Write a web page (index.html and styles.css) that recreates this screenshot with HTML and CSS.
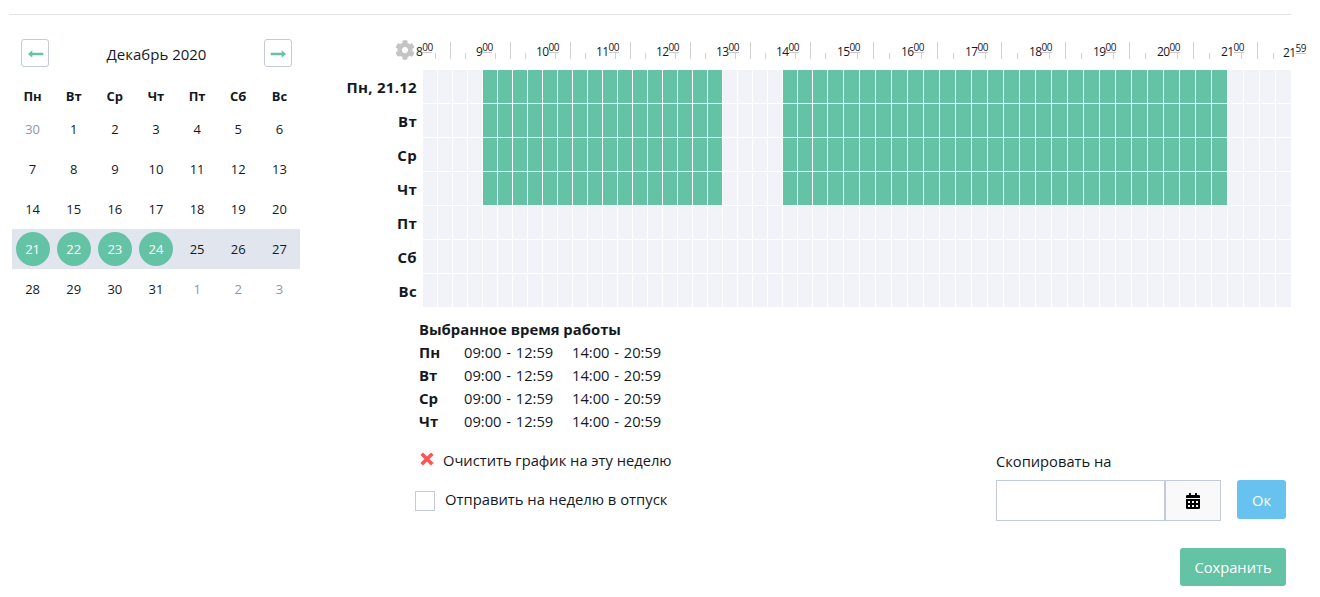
FILE: index.html
```html
<!DOCTYPE html>
<html lang="ru">
<head>
<meta charset="utf-8">
<title>График работы</title>
<link rel="stylesheet" href="styles.css">
</head>
<body>
<hr class="divider">
<main class="page">
  <section class="calendar">
    <header class="cal-head">
      <button class="nav" aria-label="Назад"><svg width="16" height="8" viewBox="0 0 16 8"><path d="M0 4 4.3 0.3V2.7H15.3V5.3H4.3V7.7Z"/></svg></button>
      <span class="cal-title">Декабрь 2020</span>
      <button class="nav" aria-label="Вперёд"><svg width="16" height="8" viewBox="0 0 16 8"><path d="M16 4 11.7 0.3V2.7H0.7V5.3H11.7V7.7Z"/></svg></button>
    </header>
    <div class="week names"><span>Пн</span><span>Вт</span><span>Ср</span><span>Чт</span><span>Пт</span><span>Сб</span><span>Вс</span></div>
    <div class="week"><span class="other">30</span><span>1</span><span>2</span><span>3</span><span>4</span><span>5</span><span>6</span></div>
    <div class="week"><span>7</span><span>8</span><span>9</span><span>10</span><span>11</span><span>12</span><span>13</span></div>
    <div class="week"><span>14</span><span>15</span><span>16</span><span>17</span><span>18</span><span>19</span><span>20</span></div>
    <div class="week current"><span class="on">21</span><span class="on">22</span><span class="on">23</span><span class="on">24</span><span>25</span><span>26</span><span>27</span></div>
    <div class="week"><span>28</span><span>29</span><span>30</span><span>31</span><span class="other">1</span><span class="other">2</span><span class="other">3</span></div>
  </section>

  <section class="schedule">
    <div class="scale">
      <svg class="gear" width="20" height="20" viewBox="0 0 512 512"><path d="M487.4 315.7l-42.6-24.6c4.3-23.2 4.3-47 0-70.2l42.6-24.6c4.9-2.8 7.1-8.6 5.5-14-11.1-35.6-30-67.8-54.7-94.6-3.8-4.1-10-5.1-14.8-2.3L380.8 110c-17.9-15.4-38.5-27.3-60.8-35.1V25.8c0-5.600-3.900-10.500-9.400-11.700-36.700-8.200-74.300-7.800-109.200 0-5.500 1.200-9.400 6.100-9.400 11.700V75c-22.200 7.900-42.800 19.800-60.800 35.100L88.700 85.500c-4.900-2.800-11-1.900-14.800 2.300-24.700 26.700-43.600 58.900-54.700 94.600-1.700 5.400.6 11.200 5.500 14L67.300 221c-4.300 23.200-4.300 47 0 70.200l-42.600 24.600c-4.900 2.800-7.100 8.600-5.500 14 11.100 35.600 30 67.800 54.700 94.600 3.800 4.100 10 5.100 14.800 2.300l42.600-24.600c17.900 15.400 38.500 27.300 60.800 35.100v49.200c0 5.600 3.900 10.500 9.400 11.700 36.700 8.200 74.300 7.800 109.200 0 5.500-1.200 9.400-6.100 9.400-11.700v-49.200c22.200-7.900 42.800-19.800 60.800-35.100l42.600 24.600c4.900 2.800 11 1.900 14.800-2.300 24.700-26.700 43.600-58.900 54.700-94.600 1.500-5.500-.7-11.300-5.600-14.100zM256 336c-44.100 0-80-35.900-80-80s35.900-80 80-80 80 35.900 80 80-35.900 80-80 80z"/></svg>
      <div class="ticks" id="ticks"></div>
    </div>
    <div class="table">
      <div class="days"><span>Пн, 21.12</span><span>Вт</span><span>Ср</span><span>Чт</span><span>Пт</span><span>Сб</span><span>Вс</span></div>
      <div class="cells" id="cells"></div>
    </div>

    <div class="lower">
      <div class="info">
        <h4>Выбранное время работы</h4>
        <div class="hours"><b>Пн</b><span>09:00 - 12:59</span><span>14:00 - 20:59</span></div>
        <div class="hours"><b>Вт</b><span>09:00 - 12:59</span><span>14:00 - 20:59</span></div>
        <div class="hours"><b>Ср</b><span>09:00 - 12:59</span><span>14:00 - 20:59</span></div>
        <div class="hours"><b>Чт</b><span>09:00 - 12:59</span><span>14:00 - 20:59</span></div>
        <div class="clear"><svg width="14" height="14" viewBox="0 0 14 14"><path d="M1.700 1.700 12.300 12.300M12.300 1.700 1.700 12.300"/></svg><span>Очистить график на эту неделю</span></div>
        <label class="vacation"><i class="box"></i><span>Отправить на неделю в отпуск</span></label>
      </div>
      <div class="copy">
        <span class="copy-label">Скопировать на</span>
        <div class="copy-row">
          <div class="field"></div>
          <div class="addon"><svg width="14" height="16" viewBox="0 0 14 16"><path fill-rule="evenodd" d="M0 5V3.300Q0 2 1.300 2H3V.4Q3 0 3.400 0H4.600Q5 0 5 .4V2H9V.4Q9 0 9.400 0H10.600Q11 0 11 .4V2H12.700Q14 2 14 3.300V5ZM0 6H14V14.700Q14 16 12.700 16H1.300Q0 16 0 14.700ZM2 8V10H4V8ZM6 8V10H8V8ZM10 8V10H12V8ZM2 12V14H4V12ZM6 12V14H8V12ZM10 12V14H12V12Z"/></svg></div>
          <button class="btn ok">Ок</button>
        </div>
        <button class="btn save">Сохранить</button>
      </div>
    </div>
  </section>
</main>
<script src="main.js"></script>
</body>
</html>
```

FILE: styles.css
```css
* { box-sizing: border-box; }
body {
  margin: 0;
  width: 1320px;
  height: 597px;
  overflow: hidden;
  background: #fff;
  color: #14191f;
  font: 14.7px/23px "Open Sans", "Noto Sans", sans-serif;
}
button { font: inherit; cursor: pointer; }
svg { display: block; flex: none; }
.divider {
  margin: 14px 29px 0 9px;
  border: 0;
  height: 1px;
  background: #e2e2e2;
}
.page { display: flex; padding-left: 12px; }

.calendar { width: 288px; padding-top: 24px; font-size: 13px; }
.cal-head {
  display: flex;
  justify-content: space-between;
  padding: 0 8px 0 9px;
  height: 28px;
}
.cal-title { font-size: 15px; line-height: 31px; }
.nav {
  width: 28px;
  height: 28px;
  padding: 1px 0 0 1px;
  display: grid;
  place-items: center;
  background: #fff;
  border: 1px solid #c3cadb;
  border-radius: 3px;
}
.nav svg { fill: #64c2a5; }
.week {
  display: grid;
  grid-template-columns: repeat(7, 1fr);
  height: 40px;
  align-items: center;
  justify-items: center;
}
.week span { width: 34px; line-height: 34px; text-align: center; }
.names { height: 26px; margin: 12px 0 4px; font-weight: 700; }
.other { color: #8d98ab; }
.current { background: #e1e5ee; }
.week .on { background: #64c2a5; color: #fff; border-radius: 50%; }

.schedule { width: 992px; padding-top: 24px; }
.scale { display: flex; height: 31px; padding-left: 95px; }
.gear { fill: #c4c4c4; margin-top: 1px; }
.ticks {
  display: grid;
  grid-template-columns: repeat(27, 15px) repeat(29, 16px) 30px;
  margin-left: 6px;
  padding-top: 3px;
}
.tick { height: 17px; white-space: nowrap; display: flex; align-items: flex-end; justify-content: flex-end; }
.tick::after { content: ""; width: 1px; height: 6px; background: #d2d2d2; flex: none; }
.tick.tall::after { height: 17px; }
.tick.none::after { display: none; }
.hour {
  width: 0;
  margin: 0 auto 0 -5px;
  display: flex;
  align-self: flex-start;
  font-size: 12px;
  line-height: 19px;
  letter-spacing: -0.6px;
}
.hour sup {
  height: 11px;
  width: 10px;
  flex: none;
  border-bottom: 1px solid #c8c8c8;
  font-size: 10px;
  line-height: 10px;
  letter-spacing: -0.6px;
}
.hour.end { margin-left: -7px; padding-top: 1px; }

.table { display: flex; }
.days {
  width: 117px;
  display: grid;
  grid-auto-rows: 34px;
  font-size: 15px;
  font-weight: 700;
  text-align: right;
  line-height: 35px;
  letter-spacing: 0.3px;
}
.cells {
  display: grid;
  grid-template-columns: repeat(27, 15px) repeat(29, 16px);
  grid-auto-rows: 34px;
  margin-left: 6px;
}
.cell { background: #f2f3f8; margin: 0 1px 1px 0; }
.cell.work { background: #64c2a5; }

.lower { display: flex; justify-content: space-between; padding-left: 115px; }
.info { padding: 10px 0 0 4px; }
.info h4 { margin: 0; font-size: 14.85px; font-weight: 700; }
.hours { display: grid; grid-template-columns: 45px 108px 100px; word-spacing: 1px; }
.hours b { font-size: 15px; }
.clear { display: flex; margin-top: 16px; }
.clear svg { margin: 3px 9px 0 1px; fill: none; stroke: #ff5454; stroke-width: 3.6; }
.vacation { display: flex; margin: 16px 0 0 -4px; font-size: 14.8px; }
.box { width: 20px; height: 20px; margin: 3px 10px 0 0; border: 1px solid #c3cadb; }

.copy { width: 290px; margin-right: 6px; padding-top: 142px; display: flex; flex-direction: column; }
.copy-row { display: flex; margin-top: 7px; }
.field { width: 169px; height: 41px; border: 1px solid #c3cadb; }
.addon {
  width: 56px;
  height: 41px;
  border: 1px solid #c3cadb;
  background: #f9f9f9;
  display: grid;
  place-items: center;
}
.btn { border: 0; border-radius: 3px; color: #fff; padding: 2px 0 0; }
.ok { width: 49px; height: 39px; margin-left: auto; background: #68c2ef; }
.save { width: 106px; height: 38px; margin-top: 27px; padding: 0; align-self: flex-end; background: #64c2a5; }
```

FILE: main.js
```js
const FIRST_HOUR = 8;
const SLOTS = 56;
const ticks = document.getElementById('ticks');
const cells = document.getElementById('cells');

function hourLabel(hour, minutes, extra) {
  return `<span class="hour ${extra}">${hour}<sup>${minutes}</sup></span>`;
}

for (let i = 0; i < SLOTS; i++) {
  const kind = ['', 'tall', '', 'none'][i % 4];
  const label = i % 4 === 0 ? hourLabel(FIRST_HOUR + i / 4, '00', '') : '';
  ticks.insertAdjacentHTML('beforeend', `<div class="tick ${kind}">${label}</div>`);
}
ticks.insertAdjacentHTML('beforeend', `<div class="tick none">${hourLabel(21, 59, 'end')}</div>`);

for (let day = 0; day < 7; day++) {
  for (let i = 0; i < SLOTS; i++) {
    const hour = FIRST_HOUR + i / 4;
    const work = day < 4 && ((hour >= 9 && hour < 13) || (hour >= 14 && hour < 21));
    cells.insertAdjacentHTML('beforeend', `<div class="cell${work ? ' work' : ''}"></div>`);
  }
}
```
